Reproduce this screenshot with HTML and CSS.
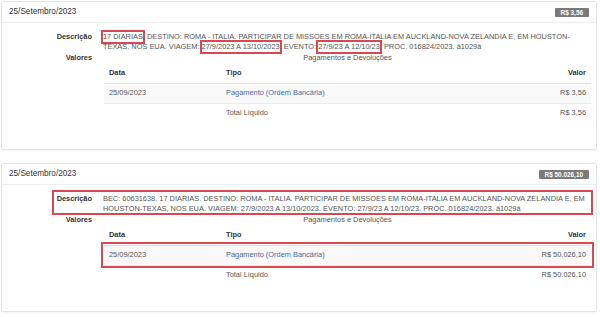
FILE: index.html
```html
<!DOCTYPE html>
<html lang="pt-BR">

<head>
    <meta charset="UTF-8" />
    <meta name="viewport" content="width=device-width, initial-scale=1.0" />
    <title>Diárias | Pagamentos</title>
    <link rel="stylesheet" href="styles.css">
</head>

<body>
    <div class="panel">
        <div class="panel-heading">
            <span class="panel-title">25/Setembro/2023</span>
            <span class="tag">R$ 3,56</span>
        </div>
        <div class="panel-body">
            <div class="dl-row">
                <div class="dt">Descrição</div>
                <div class="dd"><span class="mark">17 DIARIAS</span>. DESTINO: ROMA - ITALIA. PARTICIPAR DE MISSOES EM ROMA-ITALIA EM AUCKLAND-NOVA ZELANDIA E, EM HOUSTON-TEXAS, NOS EUA. VIAGEM: <span class="mark">27/9/2023 A 13/10/2023</span>. EVENTO: <span class="mark">27/9/23 A 12/10/23</span>. PROC. 016824/2023. â1029â</div>
            </div>
            <div class="dl-row">
                <div class="dt">Valores</div>
                <div class="dd">
                    <table class="values">
                        <caption>Pagamentos e Devoluções</caption>
                        <thead>
                            <tr>
                                <th class="col-date">Data</th>
                                <th>Tipo</th>
                                <th class="col-value">Valor</th>
                            </tr>
                        </thead>
                        <tbody>
                            <tr class="striped">
                                <td>25/09/2023</td>
                                <td><a href="#">Pagamento (Ordem Bancária)</a></td>
                                <td class="col-value">R$ 3,56</td>
                            </tr>
                            <tr>
                                <td></td>
                                <td>Total Líquido</td>
                                <td class="col-value">R$ 3,56</td>
                            </tr>
                        </tbody>
                    </table>
                </div>
            </div>
        </div>
    </div>

    <div class="panel">
        <div class="panel-heading">
            <span class="panel-title">25/Setembro/2023</span>
            <span class="tag">R$ 50.026,10</span>
        </div>
        <div class="panel-body">
            <div class="dl-row boxed">
                <div class="dt">Descrição</div>
                <div class="dd">BEC: 60631638. 17 DIARIAS. DESTINO: ROMA - ITALIA. PARTICIPAR DE MISSOES EM ROMA-ITALIA EM AUCKLAND-NOVA ZELANDIA E, EM HOUSTON-TEXAS, NOS EUA. VIAGEM: 27/9/2023 A 13/10/2023. EVENTO: 27/9/23 A 12/10/23. PROC. 016824/2023. â1029â</div>
            </div>
            <div class="dl-row">
                <div class="dt">Valores</div>
                <div class="dd">
                    <table class="values">
                        <caption>Pagamentos e Devoluções</caption>
                        <thead>
                            <tr>
                                <th class="col-date">Data</th>
                                <th>Tipo</th>
                                <th class="col-value">Valor</th>
                            </tr>
                        </thead>
                        <tbody>
                            <tr class="striped boxed-row">
                                <td>25/09/2023</td>
                                <td><a href="#">Pagamento (Ordem Bancária)</a></td>
                                <td class="col-value">R$ 50.026,10</td>
                            </tr>
                            <tr>
                                <td></td>
                                <td>Total Líquido</td>
                                <td class="col-value">R$ 50.026,10</td>
                            </tr>
                        </tbody>
                    </table>
                </div>
            </div>
        </div>
    </div>
</body>

</html>
```

FILE: styles.css
```css
* {
    margin: 0;
    padding: 0;
    box-sizing: border-box;
}

body {
    background-color: #fff;
    font-family: 'Liberation Sans', Arial, sans-serif;
    font-size: 7.4px;
    line-height: 10px;
    color: #555;
}

.panel {
    margin: 1px 3px 13px 1px;
    border: 1px solid #e4e4e4;
    border-radius: 2px;
    box-shadow: 0 1px 1px rgba(0, 0, 0, 0.04);
}

.panel-heading {
    height: 21px;
    padding: 0 7px 0 7px;
    display: flex;
    justify-content: space-between;
    align-items: center;
    border-bottom: 1px solid #ececec;
}

.panel-title {
    font-size: 8.2px;
    color: #333;
}

.tag {
    background-color: #7a7a7a;
    color: #fff;
    font-weight: bold;
    font-size: 6.4px;
    line-height: 9px;
    padding: 0 6px;
    border-radius: 1px;
}

.panel-body {
    padding: 9px 6px 25px 6px;
}

.dl-row {
    display: grid;
    grid-template-columns: 84px 1fr;
    column-gap: 11px;
    margin-bottom: 1px;
}

.dt {
    text-align: right;
    font-weight: bold;
    color: #333;
}

.dd {
    color: #555;
}

.mark {
    display: inline-block;
    vertical-align: top;
    outline: 2px solid #dc4650;
}

.boxed {
    position: relative;
}

.boxed::after {
    content: '';
    position: absolute;
    left: 44px;
    right: -3px;
    top: -4px;
    bottom: -1px;
    border: 2px solid #dc4650;
    pointer-events: none;
}

table.values {
    width: 100%;
    border-collapse: collapse;
    margin-left: 1px;
}

caption {
    text-align: center;
    line-height: 10px;
}

th,
td {
    height: 20px;
    padding: 0 5px;
    text-align: left;
    vertical-align: middle;
}

th {
    color: #333;
    font-weight: bold;
    border-bottom: 1px solid #e2e2e2;
}

td {
    border-top: 1px solid #ececec;
}

.col-date {
    width: 117px;
}

.col-value {
    text-align: right;
    width: 110px;
}

tr.striped {
    background-color: #f9f9f9;
}

tr.boxed-row {
    outline: 2px solid #dc4650;
    outline-offset: 1px;
}

a {
    color: #4a6a9e;
    text-decoration: none;
}
```
